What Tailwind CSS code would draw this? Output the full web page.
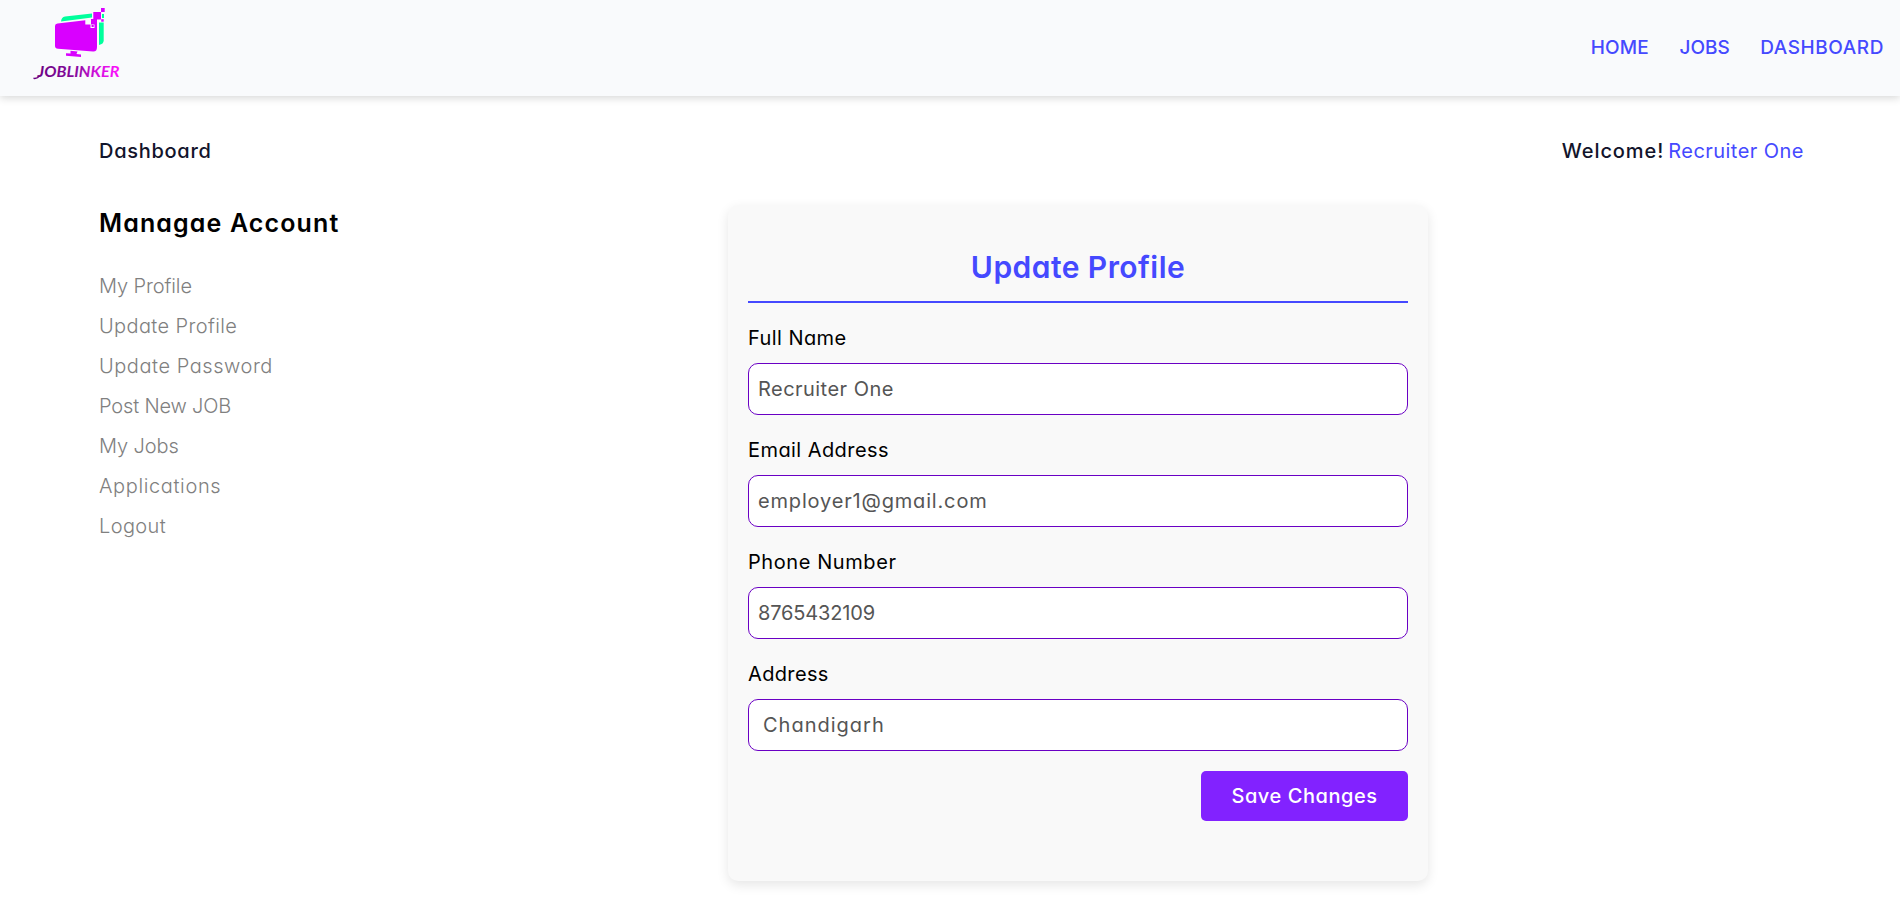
<!DOCTYPE html>
<html lang="en">
<head>
<meta charset="utf-8">
<title>JobLinker</title>
<script src="https://cdn.jsdelivr.net/npm/@tailwindcss/browser@4"></script>
</head>
<body class="min-h-screen overflow-hidden bg-white font-['Inter',sans-serif] text-[20px] leading-[30px] text-black [font-feature-settings:'cv11']">
<header class="flex h-24 items-center justify-between bg-[#f9fafc] pr-4 pl-5 shadow-[0_2px_8px_rgba(0,0,0,0.16)]">
  <svg class="h-24 w-[120px]" viewBox="20 0 120 96" role="img" aria-label="JobLinker">
    <defs>
      <linearGradient id="word" gradientUnits="userSpaceOnUse" x1="34" y1="0" x2="120" y2="0">
        <stop offset="0" stop-color="#6a0080"/><stop offset=".5" stop-color="#8a0aa0"/><stop offset=".72" stop-color="#d010dc"/><stop offset="1" stop-color="#ff10ff"/>
      </linearGradient>
    </defs>
    <g fill="#00ff9c">
      <path d="M61 21.500Q61.500 17 65 16.500L92 13.500V17.500L61 21.500Z"/>
      <path d="M99 22.500H103.700V40.500Q103.700 44 99 45Z"/>
      <path d="M102 14H104V18H102Z"/>
    </g>
    <g fill="#d900ff">
      <path d="M55 26Q55 23.800 57.500 23.500L85.300 20.200V24.500H90.500V28H94.500V24.500H91V19H97V47Q97 51.800 93 51.500L58 48.700Q55 48.500 55 46Z"/>
      <path d="M93.300 12H101V19.500H93.300Z"/>
      <path d="M101 8H104.700V12H101Z"/>
      <path d="M101.200 19.200H103.700V21.700H101.200Z"/>
      <path d="M91.600 25H93.700V27H91.600Z"/>
      <path d="M70.500 50.800L77.500 51.400L76.500 54L81 54.500V57L66 55.700V53.200L70.500 53.500Z"/>
    </g>
    <text x="37.500" y="76.700" font-family="Lato" font-weight="700" font-style="italic" font-size="15" fill="url(#word)" textLength="82" lengthAdjust="spacingAndGlyphs">JOBLINKER</text>
    <path d="M33.500 78.300Q37.500 79 39.500 75.500" fill="none" stroke="url(#word)" stroke-width="1.500"/>
  </svg>
  <nav class="flex gap-[30.5px] text-[19px] font-medium text-[#4549ff]">
    <a class="tracking-[0.18px]">HOME</a>
    <a>JOBS</a>
    <a class="tracking-[0.57px]">DASHBOARD</a>
  </nav>
</header>

<main class="pt-10 pr-24 pl-[99px]">
  <div class="flex justify-between font-medium text-[#12142b]">
    <p class="tracking-[0.72px]">Dashboard</p>
    <p class="flex gap-1"><span class="tracking-[0.92px]">Welcome!</span><span class="font-normal tracking-[0.46px] text-[#4549ff]">Recruiter One</span></p>
  </div>

  <div class="mt-[39px] flex">
    <aside class="w-[629px] shrink-0">
      <h2 class="text-[25px] leading-9 font-semibold tracking-[1.13px]">Managae Account</h2>
      <ul class="mt-[25px] font-light leading-10 text-[#808080]">
        <li class="tracking-[-0.1px]">My Profile</li>
        <li class="tracking-[0.38px]">Update Profile</li>
        <li class="tracking-[0.55px]">Update Password</li>
        <li class="tracking-[-0.16px]">Post New JOB</li>
        <li class="tracking-[-0.1px]">My Jobs</li>
        <li class="tracking-[0.63px]">Applications</li>
        <li class="tracking-[0.37px]">Logout</li>
      </ul>
    </aside>

    <section class="w-[700px] rounded-[10px] bg-[#f9f9f9] px-5 pt-10 pb-[60px] shadow-[0_4px_12px_rgba(0,0,0,0.1)]">
      <h1 class="border-b-2 border-[#4549ff] pb-[11px] text-center text-[30px] leading-[45px] font-semibold tracking-[0.45px] text-[#4549ff]">Update Profile</h1>
      <div class="mt-5 flex flex-col gap-5">
        <div>
          <div class="tracking-[0.43px]">Full Name</div>
          <div class="mt-2.5 flex h-[52px] items-center rounded-[10px] border border-[#6a00c4] bg-white px-[9px] tracking-[0.46px] text-[#555]">Recruiter One</div>
        </div>
        <div>
          <div class="tracking-[0.43px]">Email Address</div>
          <div class="mt-2.5 flex h-[52px] items-center rounded-[10px] border border-[#6a00c4] bg-white px-[9px] tracking-[0.83px] text-[#555]">employer1@gmail.com</div>
        </div>
        <div>
          <div class="tracking-[0.58px]">Phone Number</div>
          <div class="mt-2.5 flex h-[52px] items-center rounded-[10px] border border-[#6a00c4] bg-white px-[9px] tracking-[-0.17px] text-[#555]">8765432109</div>
        </div>
        <div>
          <div class="tracking-[0.36px]">Address</div>
          <div class="mt-2.5 flex h-[52px] items-center rounded-[10px] border border-[#6a00c4] bg-white px-3.5 tracking-[1px] text-[#555]">Chandigarh</div>
        </div>
        <button class="h-[50px] w-[207px] self-end rounded-[5px] bg-[#8222ff] font-medium tracking-[0.55px] text-white">Save Changes</button>
      </div>
    </section>
  </div>
</main>
</body>
</html>
